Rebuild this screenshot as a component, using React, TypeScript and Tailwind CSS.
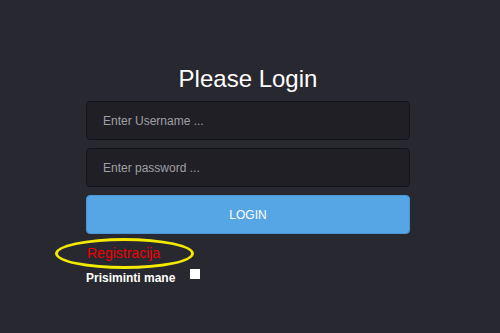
export default function App() {
  return (
    <div className="min-h-[333px] w-full bg-[#282830] font-['Liberation_Sans',Arial,sans-serif]">
      <div className="ml-[86px] w-[324px] pt-[65px]">
        <h1 className="text-center text-[24px] leading-[28px] text-white">Please Login</h1>

        <form className="mt-[8px] flex flex-col gap-[8px]" onSubmit={(e) => e.preventDefault()}>
          <input
            type="text"
            placeholder="Enter Username ..."
            className="h-[39px] w-full rounded-[4px] border border-[#141418] bg-[#1f1f25] px-[16px] text-[12px] text-white placeholder-[#a0a0a6] outline-none"
          />
          <input
            type="password"
            placeholder="Enter password ..."
            className="h-[39px] w-full rounded-[4px] border border-[#141418] bg-[#1f1f25] px-[16px] text-[12px] text-white placeholder-[#a0a0a6] outline-none"
          />
          <button
            type="submit"
            className="h-[39px] w-full rounded-[4px] border border-[#4a95d2] bg-[#56a5e4] text-[12px] text-white"
          >
            LOGIN
          </button>
        </form>

        <div className="relative mt-[11px]">
          <a href="#" className="block pl-[1px] text-[14px] leading-[16px] text-[#f00000]">
            Registracija
          </a>
          <span className="pointer-events-none absolute left-[-31px] top-[-7px] h-[31px] w-[139px] rounded-[50%] border-[3.5px] border-[#f2ea00]" />
        </div>

        <label className="mt-[10px] flex items-start gap-[15px]">
          <span className="text-[12px] font-bold leading-[14px] text-white">Prisiminti mane</span>
          <span className="mt-[-2px] block h-[10px] w-[10px] bg-white" />
        </label>
      </div>
    </div>
  );
}
